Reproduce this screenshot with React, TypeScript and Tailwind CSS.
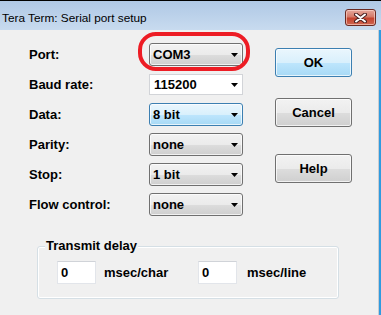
import React from "react";

const font = "font-['Liberation_Sans',Arial,sans-serif]";

const rows = [
  { label: "Port:", value: "COM3", kind: "gray" },
  { label: "Baud rate:", value: "115200", kind: "white" },
  { label: "Data:", value: "8 bit", kind: "blue" },
  { label: "Parity:", value: "none", kind: "gray" },
  { label: "Stop:", value: "1 bit", kind: "gray" },
  { label: "Flow control:", value: "none", kind: "gray" },
];

function Arrow() {
  return (
    <svg width="7" height="4" viewBox="0 0 7 4" className="shrink-0">
      <path d="M0 0H7L3.5 4Z" fill="#000" />
    </svg>
  );
}

function Combo({ value, kind }: { value: string; kind: string }) {
  if (kind === "white") {
    return (
      <div className="w-[94px] h-[21px] flex items-center justify-between pl-[4px] pr-[4px] bg-white border border-[#d2d4d8]">
        <span>{value}</span>
        <Arrow />
      </div>
    );
  }
  const skin =
    kind === "blue"
      ? "border-[#3c7fb1] bg-[linear-gradient(to_bottom,#eaf6fd_0%,#d9f0fc_50%,#bee6fd_51%,#a7d9f5_100%)]"
      : "border-[#707070] bg-[linear-gradient(to_bottom,#f2f2f2_0%,#ebebeb_50%,#dddddd_51%,#cfcfcf_100%)]";
  return (
    <div
      className={
        "w-[94px] h-[23px] flex items-center justify-between pl-[3px] pr-[4px] border rounded-[3px] shadow-[inset_0_0_0_1px_rgba(255,255,255,0.7)] " +
        skin
      }
    >
      <span>{value}</span>
      <Arrow />
    </div>
  );
}

function Button({ label, primary }: { label: string; primary?: boolean }) {
  const skin = primary
    ? "border-[#3c7fb1] bg-[linear-gradient(to_bottom,#eaf6fd_0%,#d9f0fc_50%,#bee6fd_51%,#a7d9f5_100%)]"
    : "border-[#707070] bg-[linear-gradient(to_bottom,#f2f2f2_0%,#ebebeb_50%,#dddddd_51%,#cfcfcf_100%)]";
  return (
    <div
      className={
        "w-[77px] h-[29px] flex items-center justify-center border rounded-[3px] shadow-[inset_0_0_0_1px_rgba(255,255,255,0.7)] " +
        skin
      }
    >
      {label}
    </div>
  );
}

function CloseButton() {
  return (
    <div className="mt-[8px] w-[31px] h-[17px] rounded-[3px] border border-[#6b2a22] bg-[linear-gradient(to_bottom,#e6a79b_0%,#d57a69_45%,#c4432e_55%,#cf6752_100%)] shadow-[inset_0_0_0_1px_rgba(255,220,210,0.6)] flex items-center justify-center">
      <svg width="13" height="10" viewBox="0 0 13 10">
        <path d="M2 1.5L11 8.5M11 1.5L2 8.5" stroke="#4a2020" strokeWidth="4" strokeLinecap="round" />
        <path d="M2 1.5L11 8.5M11 1.5L2 8.5" stroke="#fff" strokeWidth="2" strokeLinecap="round" />
      </svg>
    </div>
  );
}

function Edit({ value }: { value: string }) {
  return (
    <div className="w-[39px] h-[23px] flex items-center pl-[3px] bg-white border border-[#e2e5ea] border-t-[#d0d3d8]">
      {value}
    </div>
  );
}

export default function App() {
  return (
    <div className={"relative w-[381px] h-[315px] overflow-hidden bg-[#f0f0f0] flex flex-col text-[13px] font-bold text-black " + font}>
      {/* title bar */}
      <div className="h-[30px] shrink-0 border-t border-black bg-[linear-gradient(to_bottom,#afc8e5,#c8dbef)] flex items-start justify-between pl-[2px] pr-[5px]">
        <span className="pt-[10px] text-[11.8px] leading-[14px] font-normal">Tera Term: Serial port setup</span>
        <CloseButton />
      </div>

      <div className="flex flex-1">
        <div className="flex-1 flex flex-col">
          <div className="flex pt-[13px]">
            <div className="pl-[29px] flex flex-col gap-[7px]">
              {rows.map((r) => (
                <div key={r.label} className="h-[23px] flex items-center">
                  <span className="w-[120px]">{r.label}</span>
                  <Combo value={r.value} kind={r.kind} />
                </div>
              ))}
            </div>
            <div className="ml-[32px] pt-[5px] flex flex-col">
              <Button label="OK" primary />
              <div className="mt-[21px]">
                <Button label="Cancel" />
              </div>
              <div className="mt-[27px]">
                <Button label="Help" />
              </div>
            </div>
          </div>

          {/* transmit delay group */}
          <div className="relative mt-[30px] ml-[37px] w-[302px] h-[53px] border border-[#d5dfe5] rounded-[3px] shadow-[inset_0_0_0_1px_#ffffff] pt-[14px] pl-[19px]">
            <span className="absolute left-[7px] top-[-9px] leading-[15px] px-[1px] bg-[#f0f0f0]">Transmit delay</span>
            <div className="flex items-center">
              <Edit value="0" />
              <span className="ml-[8px] w-[94px]">msec/char</span>
              <Edit value="0" />
              <span className="ml-[10px]">msec/line</span>
            </div>
          </div>
        </div>
        <div className="w-[3px] shrink-0 bg-[linear-gradient(to_right,#c9ccd0_33%,#2f9be0_33%)]" />
      </div>

      {/* red annotation around the port selector */}
      <div className="absolute left-[138px] top-[32px] w-[112px] h-[39px] border-[4px] border-[#ed1c24] rounded-[18px]" />
    </div>
  );
}
